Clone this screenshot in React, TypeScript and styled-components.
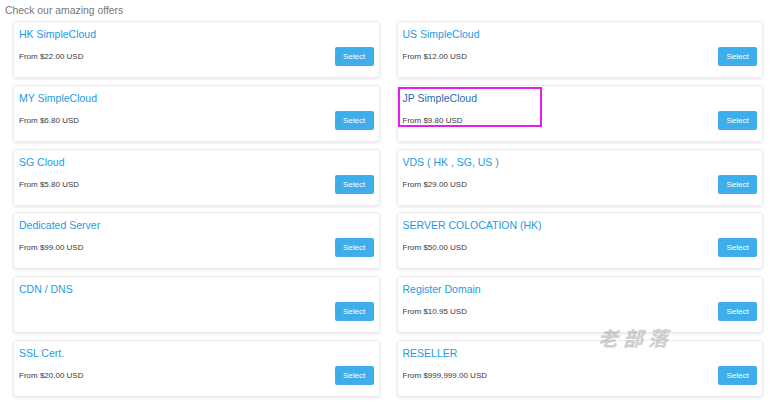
import React from "react";
import styled, { createGlobalStyle } from "styled-components";

const Global = createGlobalStyle`
  html, body { margin: 0; padding: 0; background: #fff; }
  body { font-family: "Liberation Sans", Arial, sans-serif; }
`;

const Page = styled.div`
  position: relative;
  width: 771px;
  height: 403px;
  overflow: hidden;
  padding: 4px 8px 0 8px;
  box-sizing: border-box;
`;

const Heading = styled.div`
  font-size: 10.4px;
  line-height: 14px;
  color: #777;
  margin-left: -3px;
  margin-bottom: 3px;
`;

const Grid = styled.div`
  display: grid;
  grid-template-columns: 1fr 1fr;
  column-gap: 17px;
  row-gap: 6.8px;
  padding: 0 0 0 5px;
`;

const Card = styled.div`
  position: relative;
  height: 57px;
  box-sizing: border-box;
  background: #fff;
  border: 1px solid #ececec;
  border-radius: 3px;
  box-shadow: 0 1px 3px rgba(0, 0, 0, 0.1);
  padding: 5px 5px 0 5px;
  display: flex;
  flex-direction: column;
`;

const Title = styled.div<{ $active?: boolean }>`
  font-size: 10.5px;
  line-height: 15px;
  color: ${(p) => (p.$active ? "#2a6cb0" : "#1e9ae6")};
  height: 15px;
`;

const Row = styled.div`
  margin-top: 5px;
  height: 19px;
  display: flex;
  align-items: center;
  justify-content: space-between;
`;

const Price = styled.span`
  font-size: 8px;
  color: #3a3a3a;
`;

const Button = styled.button`
  width: 39px;
  height: 19px;
  border: none;
  border-radius: 2px;
  background: #3daee9;
  color: #fff;
  font-family: "Liberation Sans", Arial, sans-serif;
  font-size: 8px;
  padding: 0;
  margin-left: auto;
  cursor: pointer;
`;

const Highlight = styled.div`
  position: absolute;
  top: 1px;
  left: 0px;
  width: 144px;
  height: 40px;
  box-sizing: border-box;
  border: 2px solid #e51fe8;
  pointer-events: none;
`;

const Watermark = styled.div`
  position: absolute;
  left: 598px;
  top: 323px;
  font-family: "Noto Sans CJK SC", sans-serif;
  font-weight: 900;
  font-style: italic;
  font-size: 20px;
  letter-spacing: 5px;
  color: rgba(160, 160, 160, 0.5);
  pointer-events: none;
`;

type Offer = { title: string; price?: string; active?: boolean };

const offers: Offer[] = [
  { title: "HK SimpleCloud", price: "From $22.00 USD" },
  { title: "US SimpleCloud", price: "From $12.00 USD" },
  { title: "MY SimpleCloud", price: "From $6.80 USD" },
  { title: "JP SimpleCloud", price: "From $9.80 USD", active: true },
  { title: "SG Cloud", price: "From $5.80 USD" },
  { title: "VDS ( HK , SG, US )", price: "From $29.00 USD" },
  { title: "Dedicated Server", price: "From $99.00 USD" },
  { title: "SERVER COLOCATION (HK)", price: "From $50.00 USD" },
  { title: "CDN / DNS" },
  { title: "Register Domain", price: "From $10.95 USD" },
  { title: "SSL Cert.", price: "From $20.00 USD" },
  { title: "RESELLER", price: "From $999,999.00 USD" },
];

export default function App() {
  return (
    <Page>
      <Global />
      <Heading>Check our amazing offers</Heading>
      <Grid>
        {offers.map((o) => (
          <Card key={o.title}>
            <Title $active={o.active}>{o.title}</Title>
            <Row>
              {o.price && <Price>{o.price}</Price>}
              <Button>Select</Button>
            </Row>
            {o.active && <Highlight />}
          </Card>
        ))}
      </Grid>
      <Watermark>老部落</Watermark>
    </Page>
  );
}
